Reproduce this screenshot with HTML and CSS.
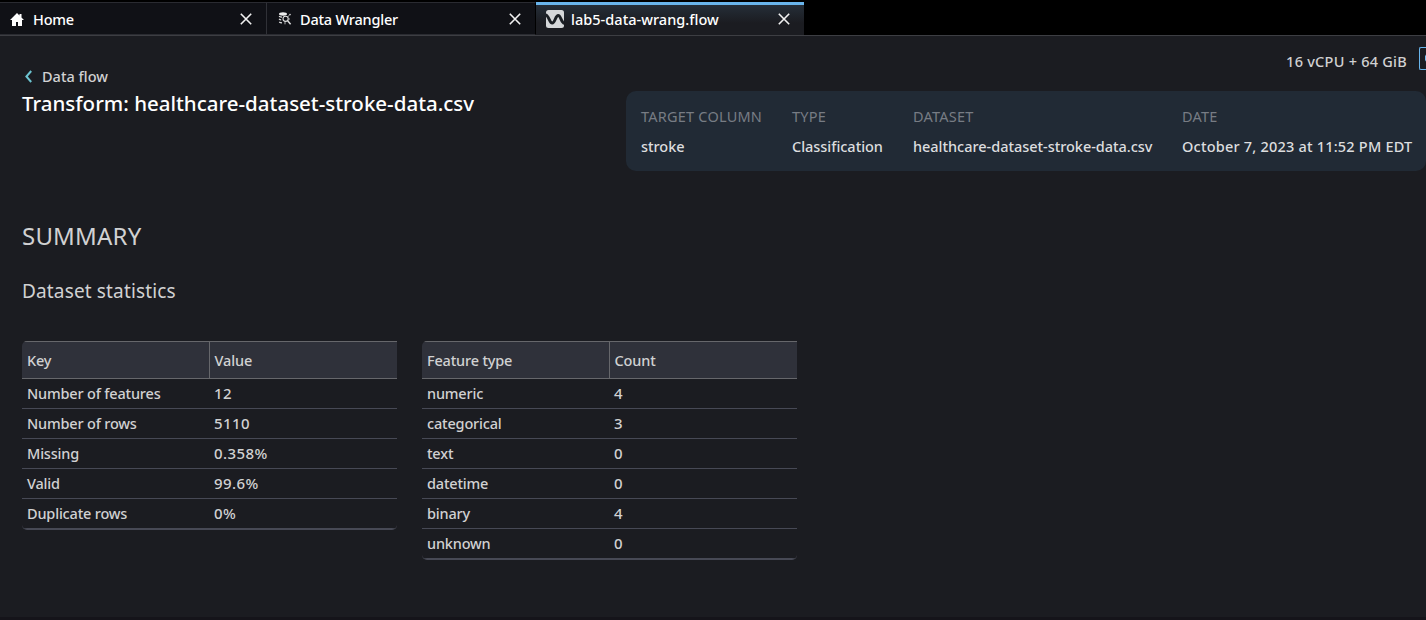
FILE: index.html
```html
<!DOCTYPE html>
<html lang="en">
<head>
<meta charset="utf-8">
<title>lab5-data-wrang.flow</title>
<link rel="stylesheet" href="styles.css">
</head>
<body>
<nav class="tabs">
  <div class="tab tab-home">
    <svg class="icon-home" width="14" height="13" viewBox="0 0 14 13"><path d="M7 0 0 7h2v6h4V9h2v4h4V7h2L11.500 4.400V1h-2v1.500z" fill="#fff"/></svg>
    <span class="tab-label t-home">Home</span>
    <svg class="close" width="12" height="12" viewBox="0 0 12 12"><path d="M.8.8l10.400 10.400M11.200.8.8 11.200"/></svg>
  </div>
  <div class="tab tab-wrangler">
    <svg class="icon-wrangler" width="14" height="14" viewBox="0 0 14 14" fill="none" stroke="#ddd"><ellipse cx="5" cy="2" rx="4" ry="1.700" fill="#eee" stroke="none"/><path d="M1 4.200c1 .7 2 .9 3 .9M1 7c.8.6 1.400.8 2.200.8M1.200 10c.8.6 1.600.8 2.800.9" stroke-width="1.200"/><circle cx="7.600" cy="6.800" r="2.600" stroke-width="1.100"/><path d="M9.600 8.800l3 3.400" stroke-width="1.500"/><path d="M9.600 4.800l1.900-1.600M10.500 7h1.500M7 9.700v2.600" stroke-width=".8"/><circle cx="12" cy="2.600" r=".8" fill="#ddd" stroke="none"/></svg>
    <span class="tab-label t-wrangler">Data Wrangler</span>
    <svg class="close" width="12" height="12" viewBox="0 0 12 12"><path d="M.8.8l10.400 10.400M11.200.8.8 11.200"/></svg>
  </div>
  <div class="tab tab-active">
    <svg class="icon-flow" width="18" height="18" viewBox="0 0 18 18"><rect width="18" height="18" rx="2.500" fill="#d5d7d9"/><path d="M-1 4.800C3 4.600 3.200 13 6.200 13S9.300 5.500 12.200 5.500s2.600 7.700 6.800 7.900" fill="none" stroke="#1b1f24" stroke-width="2.900"/></svg>
    <span class="tab-label t-flow">lab5-data-wrang.flow</span>
    <svg class="close" width="12" height="12" viewBox="0 0 12 12"><path d="M.8.8l10.400 10.400M11.200.8.8 11.200"/></svg>
  </div>
</nav>
<main class="page">
  <div class="instance">
    <span class="t-inst">16 vCPU + 64 GiB</span>
    <span class="kernel"><svg width="10" height="12" viewBox="0 0 10 12"><circle cx="5.500" cy="6" r="5" fill="none" stroke="#7abdf0" stroke-width="1.500"/></svg></span>
  </div>
  <header class="head">
    <div class="heading">
      <a class="back"><svg width="9" height="13" viewBox="0 0 9 13"><path d="M7.200 1 2.400 6.500l4.800 5.500" fill="none" stroke="#6cc3d0" stroke-width="2"/></svg><span class="t-back">Data flow</span></a>
      <h1 class="title">Transform: healthcare-dataset-stroke-data.csv</h1>
    </div>
    <dl class="meta">
      <div class="m1"><dt>TARGET COLUMN</dt><dd>stroke</dd></div>
      <div class="m2"><dt>TYPE</dt><dd>Classification</dd></div>
      <div class="m3"><dt>DATASET</dt><dd>healthcare-dataset-stroke-data.csv</dd></div>
      <div class="m4"><dt>DATE</dt><dd>October 7, 2023 at 11:52 PM EDT</dd></div>
    </dl>
  </header>
  <h2 class="summary">SUMMARY</h2>
  <h3 class="stats">Dataset statistics</h3>
  <div class="tables">
    <div class="table">
      <div class="row row-head"><span>Key</span><span>Value</span></div>
      <div class="row"><span>Number of features</span><span>12</span></div>
      <div class="row"><span>Number of rows</span><span>5110</span></div>
      <div class="row"><span>Missing</span><span>0.358%</span></div>
      <div class="row"><span>Valid</span><span>99.6%</span></div>
      <div class="row"><span>Duplicate rows</span><span>0%</span></div>
    </div>
    <div class="table">
      <div class="row row-head"><span>Feature type</span><span>Count</span></div>
      <div class="row"><span>numeric</span><span>4</span></div>
      <div class="row"><span>categorical</span><span>3</span></div>
      <div class="row"><span>text</span><span>0</span></div>
      <div class="row"><span>datetime</span><span>0</span></div>
      <div class="row"><span>binary</span><span>4</span></div>
      <div class="row"><span>unknown</span><span>0</span></div>
    </div>
  </div>
</main>
</body>
</html>
```
FILE: styles.css
```css
* { box-sizing: border-box; }
body {
  margin: 0;
  height: 620px;
  overflow: hidden;
  background: #1b1c21;
  border-bottom: 3px solid #15141a;
  color: #d1d1d2;
  font-family: "Noto Sans", "Open Sans", sans-serif;
  font-size: 14.500px;
  white-space: nowrap;
}
h1, h2, h3, dl, dd { margin: 0; font-weight: 400; }
svg { flex: none; }

.tabs {
  display: flex;
  height: 36px;
  padding-top: 2px;
  background: #000;
  border-bottom: 1px solid #3d3e43;
}
.tab {
  display: flex;
  align-items: center;
  width: 268px;
  height: 33px;
  padding: 1px 14px 0 11px;
  border-top: 1px solid #2a2b31;
  border-bottom: 1px solid #2a2b31;
  border-right: 1px solid #000;
  background: #101116;
  color: #fff;
}
.tab-home { width: 267px; border-right-color: #303137; }
.tab-wrangler { width: 269px; }
.tab-active {
  border: 0;
  border-top: 3px solid #69b5ec;
  background: linear-gradient(#252e38, #1b1c21 60%);
  padding: 0 14px 2px 10px;
}
.tab-label { line-height: 20px; font-weight: 500; }
.t-home { letter-spacing: -0.200px; }
.t-wrangler { letter-spacing: -0.200px; }
.t-flow { letter-spacing: 0.030px; }
.icon-home { margin-right: 9px; margin-left: -1px; }
.icon-wrangler { margin-right: 8px; }
.icon-flow { margin-right: 7px; }
.close { margin-left: auto; fill: none; stroke: #f2f2f2; stroke-width: 1.600; }

.page { padding-left: 22px; height: 581px; }
.instance {
  display: flex;
  justify-content: flex-end;
  align-items: center;
  gap: 12px;
  height: 44px;
}
.t-inst { margin-top: 5px; font-weight: 500; letter-spacing: 0.250px; }
.kernel {
  display: flex;
  align-items: center;
  width: 7px;
  height: 23px;
  padding-left: 5px;
  overflow: hidden;
  border: 1px solid #69b5ec;
  border-right: 0;
  border-radius: 2px 0 0 2px;
}
.head { display: flex; justify-content: space-between; height: 91px; }
.heading { margin-top: -15px; }
.back { display: flex; align-items: center; gap: 9px; height: 22px; padding-left: 2px; }
.t-back { font-weight: 500; }
.title { margin-top: 1px; font-size: 20.500px; line-height: 30px; color: #fff; font-weight: 500; }
.meta {
  display: flex;
  width: 800px;
  height: 80px;
  margin-top: 11px;
  padding: 10px 0 0 15px;
  background: #212a35;
  border-radius: 10px;
}
.meta dt, .meta dd { line-height: 30px; }
.meta dt { color: #777c84; letter-spacing: 0.220px; }
.meta dd { color: #dcdddf; font-weight: 500; letter-spacing: -0.030px; }
.m1 { width: 151px; }
.m2 { width: 121px; }
.m3 { width: 269px; }
.meta .m4 dd { letter-spacing: 0.210px; }
.summary { margin-top: 45px; font-size: 24px; line-height: 40px; letter-spacing: 0.200px; }
.stats { margin-top: 20px; font-size: 19px; line-height: 30px; letter-spacing: 0.150px; }
.tables { display: flex; align-items: flex-start; gap: 25px; margin-top: 35px; }
.table {
  width: 375px;
  overflow: hidden;
  border-radius: 5px 0 5px 5px;
  border-bottom: 1px solid #474955;
  font-weight: 500;
  letter-spacing: -0.180px;
}
.row {
  display: grid;
  grid-template-columns: 188px 187px;
  height: 30px;
  line-height: 29px;
  border-bottom: 1px solid #474955;
}
.row span { padding-left: 5px; }
.row span + span { padding-left: 4px; font-size: 15px; letter-spacing: 0.400px; }
.row-head {
  height: 38px;
  line-height: 37px;
  background: #2f313a;
  border-top: 1px solid #66676b;
  border-bottom-color: #66676b;
}
.row-head span:first-child { border-right: 1px solid #66676b; }
.row-head span + span { padding-left: 4.500px; font-size: 14.500px; letter-spacing: -0.100px; }
```
